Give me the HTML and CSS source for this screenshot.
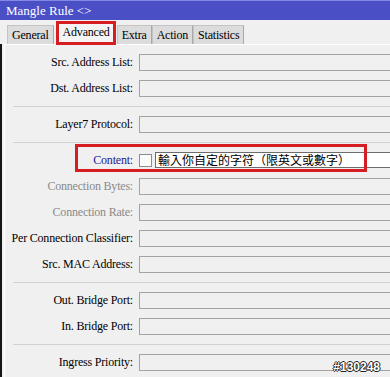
FILE: index.html
```html
<!DOCTYPE html>
<html lang="zh-Hant">
<head>
  <meta charset="UTF-8">
  <title>Mangle Rule</title>
  <link rel="stylesheet" href="styles.css">
</head>
<body>
  <div class="window">
    <div class="titlebar">Mangle Rule &lt;&gt;</div>

    <div class="tabs">
      <div class="tab">General</div>
      <div class="tab active">Advanced</div>
      <div class="tab">Extra</div>
      <div class="tab">Action</div>
      <div class="tab">Statistics</div>
    </div>

    <div class="panel">
      <div class="sheet">
        <div class="group">
          <div class="row"><label>Src. Address List:</label><div class="box"></div></div>
          <div class="row"><label>Dst. Address List:</label><div class="box"></div></div>
        </div>
        <div class="sep"></div>
        <div class="group">
          <div class="row"><label>Layer7 Protocol:</label><div class="box"></div></div>
        </div>
        <div class="sep"></div>
        <div class="group">
          <div class="row content-row">
            <label class="blue">Content:</label>
            <div class="check"></div>
            <div class="box text-box">輸入你自定的字符（限英文或數字）</div>
            <div class="mark"></div>
          </div>
          <div class="row"><label class="off">Connection Bytes:</label><div class="box"></div></div>
          <div class="row"><label class="off">Connection Rate:</label><div class="box"></div></div>
          <div class="row"><label>Per Connection Classifier:</label><div class="box"></div></div>
          <div class="row"><label>Src. MAC Address:</label><div class="box"></div></div>
        </div>
        <div class="sep"></div>
        <div class="group">
          <div class="row"><label>Out. Bridge Port:</label><div class="box"></div></div>
          <div class="row"><label>In. Bridge Port:</label><div class="box"></div></div>
        </div>
        <div class="sep"></div>
        <div class="group">
          <div class="row"><label>Ingress Priority:</label><div class="box"></div></div>
        </div>
      </div>
    </div>

    <div class="stamp">#130248</div>
  </div>
</body>
</html>
```

FILE: styles.css
```css
body {
  margin: 0;
  padding: 0;
  background-color: #f0f0f0;
  font-family: "Liberation Serif", "Noto Sans CJK TC", serif;
  font-size: 12px;
  color: #000;
}

.window {
  position: relative;
  width: 390px;
  height: 377px;
  overflow: hidden;
}

.titlebar {
  height: 19px;
  line-height: 19px;
  border-top: 1px solid #8288e4;
  background-color: #4a4fc6;
  color: white;
  font-size: 13px;
  padding-left: 6px;
}

/* Tabs */
.tabs {
  display: flex;
  align-items: flex-end;
  height: 24px;
  padding-left: 7px;
}

.tab {
  position: relative;
  height: 18px;
  line-height: 18px;
  padding: 0 4px;
  background-color: #dcdcdc;
  border: 1px solid #c4c4c4;
  border-bottom: none;
  border-right-color: #a8a8a8;
  letter-spacing: -0.2px;
}

.tab.active {
  height: 21px;
  line-height: 19px;
  margin: 0 3px 0 5px;
  padding: 0 3px;
  background-color: #f4f4f4;
  border-color: #ffffff;
  border-right-color: #a0a0a0;
}

.tab.active::after {
  content: "";
  position: absolute;
  left: -4px;
  right: -3px;
  top: -2px;
  bottom: -1px;
  border: 3px solid #d51d22;
}

/* Panel */
.panel {
  border-left: 2px solid #161616;
  height: 333px;
}

.sheet {
  margin-left: 2px;
  border-left: 1px solid #ffffff;
  border-top: 1px solid #ffffff;
  height: 100%;
}

.group {
  padding: 4px 0 5px;
}

.sep {
  margin-left: 8px;
  border-top: 1px solid #d2d2d2;
}

.row {
  position: relative;
  display: flex;
  align-items: center;
  height: 26px;
}

.row label {
  flex: 0 0 128px;
  text-align: right;
  margin-right: 6px;
  white-space: nowrap;
  letter-spacing: -0.2px;
}

.row label.blue {
  color: #1d2390;
}

.row label.off {
  color: #8a8a8a;
}

.box {
  flex: 1;
  height: 15px;
  border: 1px solid #a3a3a3;
  border-right: none;
  background-color: #f0f0f0;
}

.check {
  width: 11px;
  height: 11px;
  margin-right: 3px;
  border: 1px solid #8c8c8c;
  background-color: #fafafa;
}

.text-box {
  height: 14px;
  line-height: 14px;
  padding-left: 2px;
  background-color: #ffffff;
  border-color: #6c6c6c;
  font-family: "Noto Sans CJK TC", sans-serif;
  font-size: 12px;
  white-space: nowrap;
}

.mark {
  position: absolute;
  left: 70px;
  top: -3px;
  width: 286px;
  height: 22px;
  border: 3px solid #d51d22;
}

.stamp {
  position: absolute;
  right: 10px;
  bottom: 3px;
  font-family: "Liberation Sans", sans-serif;
  font-weight: bold;
  font-size: 12px;
  color: #ffffff;
  text-shadow: 1px 0 0 #222, -1px 0 0 #222, 0 1px 0 #222, 0 -1px 0 #222;
}
```
